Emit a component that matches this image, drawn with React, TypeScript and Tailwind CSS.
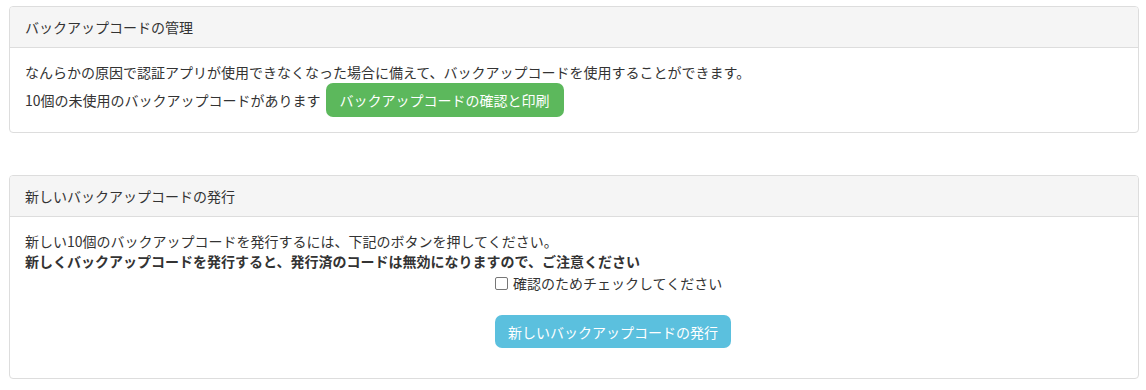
import React from "react";

export default function App() {
  const font = { fontFamily: '"Noto Sans CJK JP", "Noto Sans", sans-serif' };
  return (
    <div className="w-[1146px] h-[390px] bg-white text-[#333] text-[14px] leading-[20px] pt-[6px] pl-[9px]" style={font}>
      <div className="w-[1130px] border border-[#ddd] rounded-[4px] overflow-hidden">
        <div className="h-[41px] bg-[#f5f5f5] border-b border-[#ddd] flex items-center px-[15px]">
          バックアップコードの管理
        </div>
        <div className="pt-[14px] pb-[15px] px-[15px]">
          <div className="h-[20px]">
            なんらかの原因で認証アプリが使用できなくなった場合に備えて、バックアップコードを使用することができます。
          </div>
          <div className="flex items-center h-[35px]">
            <span>10個の未使用のバックアップコードがあります</span>
            <button className="ml-[5px] h-[34px] px-[14px] rounded-[7px] bg-[#5cb85c] text-white text-[14px] leading-[20px]">
              バックアップコードの確認と印刷
            </button>
          </div>
        </div>
      </div>

      <div className="mt-[42px] w-[1130px] border border-[#ddd] rounded-[4px] overflow-hidden">
        <div className="h-[41px] bg-[#f5f5f5] border-b border-[#ddd] flex items-center px-[15px]">
          新しいバックアップコードの発行
        </div>
        <div className="pt-[14px] pb-[15px] px-[15px]">
          <div className="h-[20px]">
            新しい10個のバックアップコードを発行するには、下記のボタンを押してください。
          </div>
          <div className="h-[20px] font-bold">
            新しくバックアップコードを発行すると、発行済のコードは無効になりますので、ご注意ください
          </div>
          <div className="ml-[470px] mt-[2px] h-[20px] flex items-center">
            <span className="inline-block w-[13px] h-[13px] border border-[#767676] rounded-[2px] bg-white"></span>
            <span className="ml-[5px]">確認のためチェックしてください</span>
          </div>
          <div className="ml-[470px] mt-[22px] mb-[15px]">
            <button className="h-[33px] px-[13px] rounded-[7px] bg-[#5bc0de] text-white text-[14px] leading-[20px]">
              新しいバックアップコードの発行
            </button>
          </div>
        </div>
      </div>
    </div>
  );
}
